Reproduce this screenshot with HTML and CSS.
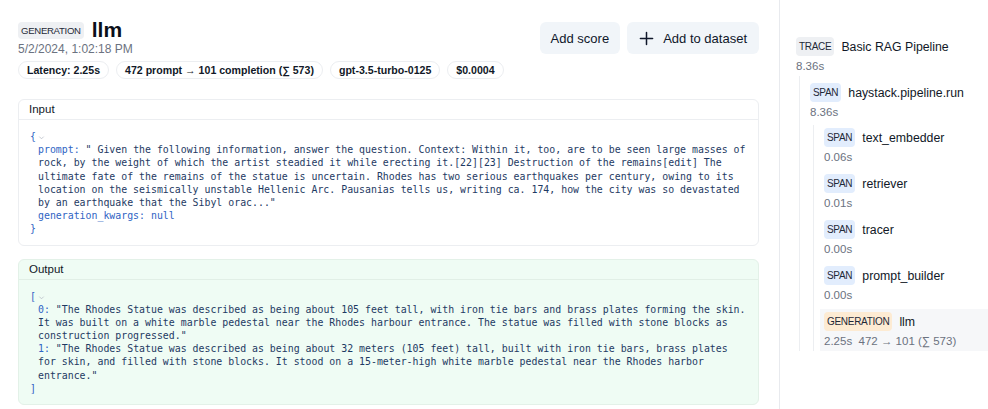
FILE: index.html
```html
<!DOCTYPE html>
<html>
<head>
<meta charset="utf-8">
<link rel="stylesheet" href="styles.css">
</head>
<body>
<div class="page">
  <main class="main">
    <header class="head">
      <div class="head-left">
        <div class="title-row">
          <span class="badge badge-gray badge-head">GENERATION</span>
          <h1 class="title">llm</h1>
        </div>
        <div class="date">5/2/2024, 1:02:18 PM</div>
        <div class="chips">
          <span class="chip">Latency: 2.25s</span>
          <span class="chip">472 prompt → 101 completion (∑ 573)</span>
          <span class="chip">gpt-3.5-turbo-0125</span>
          <span class="chip">$0.0004</span>
        </div>
      </div>
      <div class="actions">
        <button class="btn">Add score</button>
        <button class="btn"><svg class="plus" viewBox="0 0 16 16" width="15" height="15"><path d="M8 1.5v13M1.5 8h13" stroke="#0f172a" stroke-width="1.6" fill="none" stroke-linecap="round"/></svg>Add to dataset</button>
      </div>
    </header>

    <section class="card">
      <div class="card-head">Input</div>
      <div class="code">
        <div class="ln"><span class="k">{</span><svg class="chev" viewBox="0 0 8 8" width="7" height="7"><path d="M1.5 3l2.5 2.5L6.5 3" stroke="#b6bcc6" stroke-width="0.9" fill="none"/></svg></div>
        <div class="ind">
          <div class="ln"><span class="k">prompt:</span> <span class="s">" Given the following information, answer the question. Context: Within it, too, are to be seen large masses of</span></div>
          <div class="ln s">rock, by the weight of which the artist steadied it while erecting it.[22][23] Destruction of the remains[edit] The</div>
          <div class="ln s">ultimate fate of the remains of the statue is uncertain. Rhodes has two serious earthquakes per century, owing to its</div>
          <div class="ln s">location on the seismically unstable Hellenic Arc. Pausanias tells us, writing ca. 174, how the city was so devastated</div>
          <div class="ln s">by an earthquake that the Sibyl orac..."</div>
          <div class="ln"><span class="k">generation_kwargs:</span> <span class="k">null</span></div>
        </div>
        <div class="ln"><span class="k">}</span></div>
      </div>
    </section>

    <section class="card card-out">
      <div class="card-head">Output</div>
      <div class="code">
        <div class="ln"><span class="k">[</span><svg class="chev" viewBox="0 0 8 8" width="7" height="7"><path d="M1.5 3l2.5 2.5L6.5 3" stroke="#b6bcc6" stroke-width="0.9" fill="none"/></svg></div>
        <div class="ind">
          <div class="ln"><span class="k">0:</span> <span class="s">"The Rhodes Statue was described as being about 105 feet tall, with iron tie bars and brass plates forming the skin.</span></div>
          <div class="ln s">It was built on a white marble pedestal near the Rhodes harbour entrance. The statue was filled with stone blocks as</div>
          <div class="ln s">construction progressed."</div>
          <div class="ln"><span class="k">1:</span> <span class="s">"The Rhodes Statue was described as being about 32 meters (105 feet) tall, built with iron tie bars, brass plates</span></div>
          <div class="ln s">for skin, and filled with stone blocks. It stood on a 15-meter-high white marble pedestal near the Rhodes harbor</div>
          <div class="ln s">entrance."</div>
        </div>
        <div class="ln"><span class="k">]</span></div>
      </div>
    </section>
  </main>

  <aside class="side">
    <div class="node">
      <div class="item">
        <div class="item-row"><span class="badge badge-gray">TRACE</span><span class="name">Basic RAG Pipeline</span></div>
        <div class="dur">8.36s</div>
      </div>
      <div class="children">
        <div class="node">
          <div class="item">
            <div class="item-row"><span class="badge badge-blue">SPAN</span><span class="name">haystack.pipeline.run</span></div>
            <div class="dur">8.36s</div>
          </div>
          <div class="children">
            <div class="item">
              <div class="item-row"><span class="badge badge-blue">SPAN</span><span class="name">text_embedder</span></div>
              <div class="dur">0.06s</div>
            </div>
            <div class="item">
              <div class="item-row"><span class="badge badge-blue">SPAN</span><span class="name">retriever</span></div>
              <div class="dur">0.01s</div>
            </div>
            <div class="item">
              <div class="item-row"><span class="badge badge-blue">SPAN</span><span class="name">tracer</span></div>
              <div class="dur">0.00s</div>
            </div>
            <div class="item">
              <div class="item-row"><span class="badge badge-blue">SPAN</span><span class="name">prompt_builder</span></div>
              <div class="dur">0.00s</div>
            </div>
            <div class="item item-active">
              <div class="item-row"><span class="badge badge-orange">GENERATION</span><span class="name">llm</span></div>
              <div class="dur">2.25s&nbsp;&nbsp;472 → 101 (∑ 573)</div>
            </div>
          </div>
        </div>
      </div>
    </div>
  </aside>
</div>
</body>
</html>
```

FILE: styles.css
```css
* { box-sizing: border-box; }
html, body { margin: 0; padding: 0; background: #ffffff; }
body {
  font-family: "Liberation Sans", Arial, sans-serif;
  color: #0f172a;
  width: 988px;
  height: 409px;
  overflow: hidden;
}
.page {
  display: flex;
  height: 409px;
}
.main {
  width: 780px;
  padding: 17px 20px 0 18px;
  border-right: 1px solid #e8eaee;
  flex-shrink: 0;
}
.head {
  display: flex;
  justify-content: space-between;
  align-items: flex-start;
}
.head-left { flex: 1; min-width: 0; }
.title-row {
  display: flex;
  align-items: center;
  gap: 8px;
  height: 26px;
}
.badge {
  display: inline-flex;
  align-items: center;
  height: 18px;
  padding: 0 3px;
  border-radius: 4px;
  font-size: 10px;
  letter-spacing: -0.3px;
  font-weight: 500;
  color: #1f2937;
  white-space: nowrap;
}
.badge-head { font-size: 9.6px; height: 17px; }
.badge-gray { background: #eef0f3; }
.badge-blue { background: #e2edfd; }
.badge-orange { background: #fdebd3; }
.title {
  margin: 0;
  font-size: 21px;
  font-weight: 700;
  line-height: 26px;
  color: #0b0f19;
}
.date {
  font-size: 12px;
  color: #6b7280;
  line-height: 16px;
  margin-top: -2px;
}
.chips {
  display: flex;
  gap: 7px;
  margin-top: 4px;
}
.chip {
  display: inline-flex;
  align-items: center;
  height: 18px;
  padding: 0 8px;
  border: 1px solid #eceef1;
  border-radius: 9999px;
  font-size: 10.6px;
  font-weight: 700;
  color: #111827;
  white-space: nowrap;
  flex-shrink: 0;
}
.actions {
  display: flex;
  gap: 7px;
  margin-top: 5px;
  flex-shrink: 0;
}
.btn {
  display: inline-flex;
  align-items: center;
  gap: 9px;
  height: 32px;
  padding: 0 12px;
  border: none;
  border-radius: 6px;
  background: #f1f5f9;
  font-family: inherit;
  font-size: 13px;
  font-weight: 500;
  color: #0f172a;
  white-space: nowrap;
}
.btn:first-child { padding: 0 11px; }
.plus { display: block; }
.card {
  margin-top: 20px;
  border: 1px solid #eceef1;
  border-radius: 6px;
  background: #ffffff;
}
.card-out {
  margin-top: 13px;
  background: #effcf4;
  border-color: #e3f1e8;
}
.card-head {
  height: 20px;
  padding: 0 10px;
  font-size: 11.5px;
  font-weight: 500;
  line-height: 19px;
  color: #111827;
  border-bottom: 1px solid #eceef1;
}
.card-out .card-head { border-bottom-color: #e1efe6; }
.code {
  padding: 10px 11px 9px 11px;
  font-family: "DejaVu Sans Mono", "Liberation Mono", monospace;
  font-size: 9.9px;
  line-height: 13.2px;
  color: #1e3a63;
}
.ln { white-space: pre; height: 13.2px; }
.ln .s, .ln.s { color: #1e3a63; }
.ind { padding-left: 8px; }
.k { color: #2f64c4; }
.chev { margin-left: 2px; vertical-align: -1px; }

.side {
  flex: 1;
  padding-top: 34px;
  padding-left: 12px;
  overflow: hidden;
}
.item {
  padding: 3px 4px;
  height: 42px;
  margin-bottom: 4px;
}
.item-active {
  background: #f6f7f9;
  margin-bottom: 0;
}
.item-row {
  display: flex;
  align-items: center;
  gap: 7px;
  height: 19px;
}
.item-row .badge { height: 19px; }
.name {
  font-size: 12.3px;
  color: #111827;
  white-space: nowrap;
}
.dur {
  margin-top: 4px;
  font-size: 11.5px;
  line-height: 13px;
  color: #6b7280;
  white-space: nowrap;
}
.children {
  margin-left: 7px;
  border-left: 1px solid #eceef1;
  padding-left: 6px;
  margin-top: -4px;
  padding-top: 4px;
}
.node > .children > .node > .children { margin-top: -1px; padding-top: 0; }
```
